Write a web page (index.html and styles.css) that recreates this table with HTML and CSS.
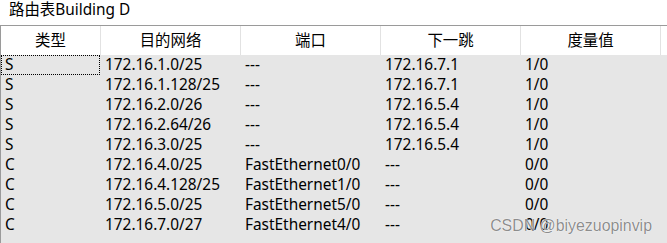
FILE: index.html
```html
<!DOCTYPE html>
<html lang="zh">
<head>
<meta charset="utf-8">
<title>路由表Building D</title>
<link rel="stylesheet" href="styles.css">
</head>
<body>
<div class="window">
  <div class="title">路由表Building D</div>
  <div class="table">
    <div class="head">
      <div class="hc">类型</div>
      <div class="hc">目的网络</div>
      <div class="hc">端口</div>
      <div class="hc">下一跳</div>
      <div class="hc">度量值</div>
      <div class="hc rest"></div>
    </div>
    <div class="rows">
      <div class="row"><div class="c focus">S</div><div class="c">172.16.1.0/25</div><div class="c">---</div><div class="c">172.16.7.1</div><div class="c">1/0</div></div>
      <div class="row"><div class="c">S</div><div class="c">172.16.1.128/25</div><div class="c">---</div><div class="c">172.16.7.1</div><div class="c">1/0</div></div>
      <div class="row"><div class="c">S</div><div class="c">172.16.2.0/26</div><div class="c">---</div><div class="c">172.16.5.4</div><div class="c">1/0</div></div>
      <div class="row"><div class="c">S</div><div class="c">172.16.2.64/26</div><div class="c">---</div><div class="c">172.16.5.4</div><div class="c">1/0</div></div>
      <div class="row"><div class="c">S</div><div class="c">172.16.3.0/25</div><div class="c">---</div><div class="c">172.16.5.4</div><div class="c">1/0</div></div>
      <div class="row"><div class="c">C</div><div class="c">172.16.4.0/25</div><div class="c">FastEthernet0/0</div><div class="c">---</div><div class="c">0/0</div></div>
      <div class="row"><div class="c">C</div><div class="c">172.16.4.128/25</div><div class="c">FastEthernet1/0</div><div class="c">---</div><div class="c">0/0</div></div>
      <div class="row"><div class="c">C</div><div class="c">172.16.5.0/25</div><div class="c">FastEthernet5/0</div><div class="c">---</div><div class="c">0/0</div></div>
      <div class="row"><div class="c">C</div><div class="c">172.16.7.0/27</div><div class="c">FastEthernet4/0</div><div class="c">---</div><div class="c">0/0</div></div>
    </div>
  </div>
  <div class="watermark">CSDN @biyezuopinvip</div>
</div>
</body>
</html>
```
FILE: styles.css
```css
html, body {
  margin: 0;
  padding: 0;
  background: #ffffff;
}
body {
  font-family: "Noto Sans", "Noto Sans CJK SC", sans-serif;
  font-size: 15.4px;
  color: #000;
  overflow: hidden;
}
.window {
  position: relative;
  width: 667px;
  height: 243px;
  overflow: hidden;
}
.title {
  height: 25px;
  line-height: 20px;
  box-sizing: border-box;
  padding-left: 9px;
  white-space: nowrap;
}
.table {
  border-top: 1px solid #9a9a9a;
  border-left: 1px solid #9a9a9a;
  height: 217px;
  background: #e6e6e6;
}
.head {
  display: grid;
  grid-template-columns: 100px 140px 140px 140px 140px 1fr;
  height: 29px;
  background: #ffffff;
}
.hc {
  border-right: 1px solid #e2e2e2;
  text-align: center;
  line-height: 29px;
  white-space: nowrap;
}
.hc.rest {
  border-right: none;
}
.rows {
  display: flex;
  flex-direction: column;
}
.row {
  display: grid;
  grid-template-columns: 100px 140px 140px 140px 140px;
  height: 20px;
}
.c {
  padding-left: 4px;
  line-height: 20px;
  white-space: nowrap;
}
.c.focus {
  outline: 1px dotted #000;
  outline-offset: -1px;
  margin-right: 1px;
}
.watermark {
  position: absolute;
  right: 15px;
  bottom: 8px;
  font-family: "Liberation Sans", Arial, sans-serif;
  font-size: 15.9px;
  line-height: 18px;
  color: rgba(120, 120, 120, 0.85);
  text-shadow: 0 0 1px #ffffff, 0 0 1px #ffffff;
  white-space: nowrap;
}
```
